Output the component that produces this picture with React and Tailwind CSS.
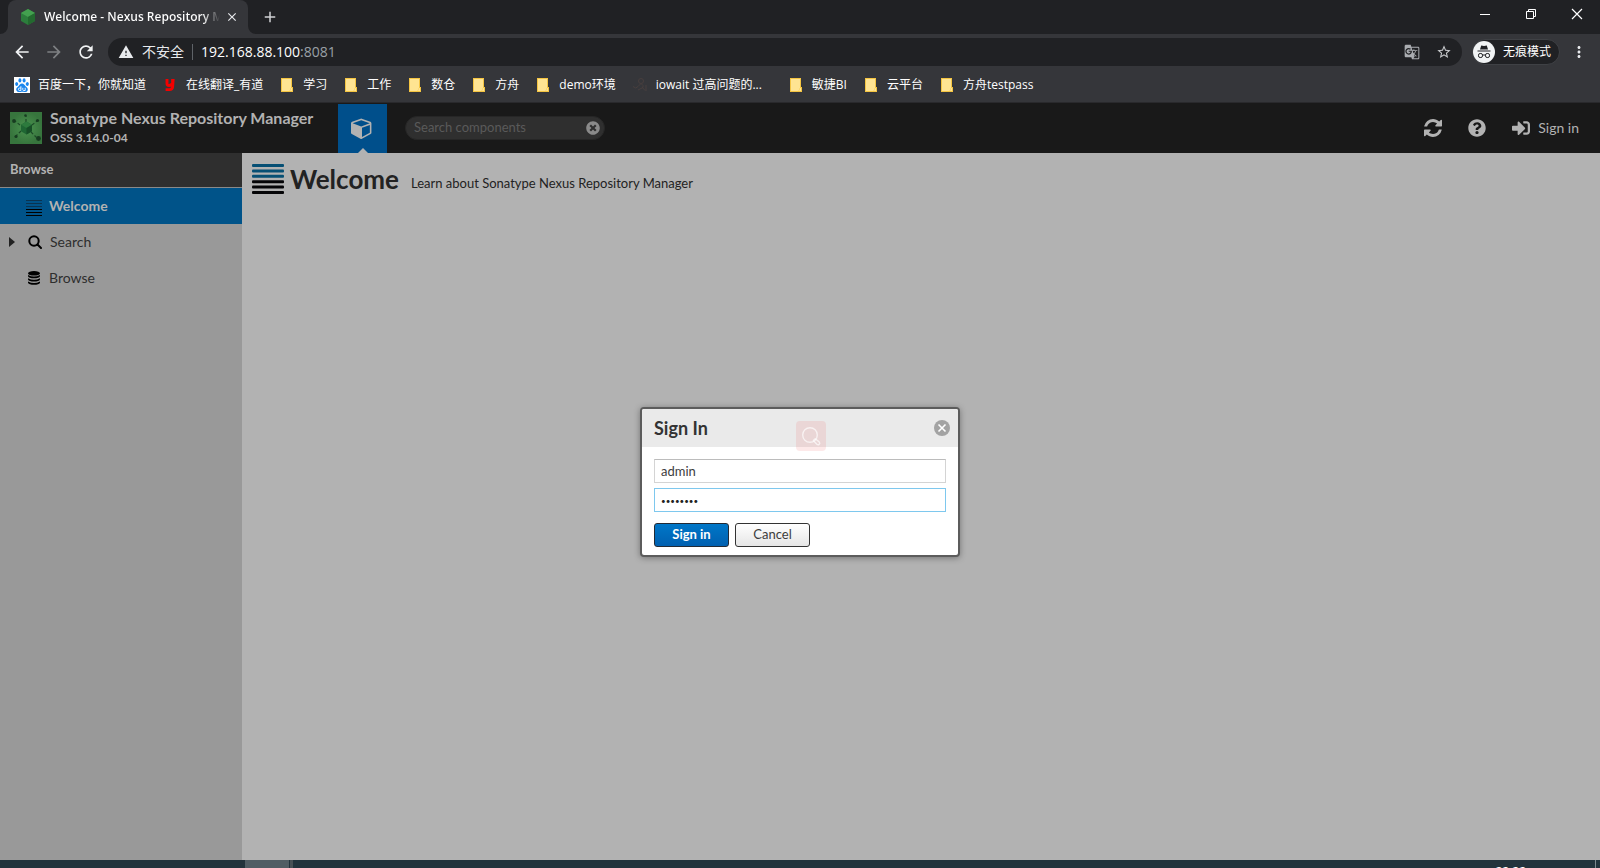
import React from 'react';
import { FaQuestionCircle, FaSignInAlt, FaTimesCircle } from 'react-icons/fa';
import { MdArrowBack, MdArrowForward, MdRefresh, MdWarning, MdStarBorder, MdMoreVert, MdClose, MdAdd, MdGTranslate } from 'react-icons/md';

const BOOKMARKS = [
  { icon: 'baidu', label: '百度一下，你就知道' },
  { icon: 'youdao', label: '在线翻译_有道' },
  { icon: 'folder', label: '学习' },
  { icon: 'folder', label: '工作' },
  { icon: 'folder', label: '数仓' },
  { icon: 'folder', label: '方舟' },
  { icon: 'folder', label: 'demo环境' },
  { icon: 'figure', label: 'iowait 过高问题的...', width: 'w-[140px]' },
  { icon: 'folder', label: '敏捷BI' },
  { icon: 'folder', label: '云平台' },
  { icon: 'folder', label: '方舟testpass' },
];

function BookmarkIcon({ kind }) {
  if (kind === 'baidu') {
    return (
      <svg className="size-4 shrink-0" viewBox="0 0 16 16">
        <rect width="16" height="16" fill="#fff" />
        <g fill="#1a86ee">
          <ellipse cx="2.7" cy="7" rx="1.500" ry="1.900" transform="rotate(-15 2.7 7)" />
          <ellipse cx="5.9" cy="3.400" rx="1.500" ry="2.100" />
          <ellipse cx="10.1" cy="3.400" rx="1.500" ry="2.100" />
          <ellipse cx="13.3" cy="7" rx="1.500" ry="1.900" transform="rotate(15 13.3 7)" />
          <path d="M8 6.600c1.900 0 2.500 1.700 3.600 2.700s2.400 1.900 2.200 3.500-1.500 2.400-2.900 2.300S9 14.800 8 14.800s-1.600.3-2.900.3-2.700-.7-2.900-2.300 1.100-2.500 2.200-3.500S6.100 6.600 8 6.600z" />
        </g>
        <path d="M6.900 9.200v4.300H5.600a1.200 1.200 0 0 1 0-2.500h1.200M8.800 10.800v1.900q0 .8.800.8h1.600v-2.700" fill="none" stroke="#fff" strokeWidth=".9" />
      </svg>
    );
  }
  if (kind === 'youdao') {
    return (
      <svg className="size-4 shrink-0" viewBox="0 0 16 16">
        <path d="M5 2v4.500q0 2 2 2t3.600-2V2M11.200 2 10.600 10q-.4 2.600-3 2.600H3.600" fill="none" stroke="#f40000" strokeWidth="2.900" />
      </svg>
    );
  }
  if (kind === 'figure') {
    return (
      <svg className="size-4 shrink-0" viewBox="0 0 16 16" fill="none" stroke="#483f3e" strokeWidth="1">
        <circle cx="9" cy="4" r="2.500" />
        <path d="M1 9.500q3 3 5 0l3-3q3 2 2 4l-5 2.500M10 10l3 3.500M14 8v6" />
      </svg>
    );
  }
  return (
    <svg className="size-4 shrink-0" viewBox="0 0 16 16">
      <path d="M2 1h11v9h1v5H2z" fill="#f5c542" />
      <path d="M3 2h9v8.500l-1.500 3.500H3z" fill="#ffe492" />
      <path d="M12 11h1v3h-2z" fill="#ffe492" />
    </svg>
  );
}

function NexusCube({ className }) {
  return (
    <svg className={className} viewBox="0 0 16 16">
      <path d="M8 0l7 4v8l-7 4-7-4V4z" fill="#2c7d3c" />
      <path d="M8 0l7 4-7 4-7-4z" fill="#43a04f" />
      <path d="M8 8l7-4v8l-7 4z" fill="#23692f" />
    </svg>
  );
}

function NexusLogo() {
  return (
    <svg className="size-8 shrink-0" viewBox="0 0 32 32">
      <defs>
        <radialGradient id="logo">
          <stop offset="0" stopColor="#4c9550" />
          <stop offset="1" stopColor="#37753d" />
        </radialGradient>
      </defs>
      <rect width="32" height="32" fill="url(#logo)" />
      <path d="M16 10V4M10 13l-5-4M22 13l5-4M11 19l-5 5M21 20l6 6" stroke="#1d4a28" strokeWidth="1.200" strokeDasharray="3 2" />
      <g fill="#173c20">
        <circle cx="15.500" cy="3.500" r="1.300" />
        <circle cx="4" cy="9" r="1.900" />
        <circle cx="27.500" cy="8.500" r="1.600" />
        <circle cx="6" cy="24.500" r="1.600" />
        <circle cx="28.500" cy="26.500" r="2.400" />
      </g>
      <path d="M16.500 9.500l5.500 3.200v6.600l-5.500 3.200-5.500-3.200v-6.600z" fill="#1f6733" />
      <path d="M16.500 9.500l5.500 3.200-5.500 3.200-5.500-3.200z" fill="#2d7a3d" />
      <path d="M16.500 15.900l5.500-3.200v6.600l-5.500 3.200z" fill="#174f27" />
    </svg>
  );
}

function StackedLines({ className, top, bar }) {
  return (
    <svg className={className} viewBox="0 0 32 32" preserveAspectRatio="none">
      {[0, 1, 2, 3, 4, 5].map((i) => (
        <rect key={i} x="0" y={1 + i * 5.4} width="32" height={bar} rx="1" fill={i < 3 ? top : '#050507'} />
      ))}
    </svg>
  );
}

function ThinLines() {
  return (
    <svg className="mt-1 mr-[7px] h-[17px] w-4" viewBox="0 0 16 17">
      {[0, 3, 6, 9, 12, 15].map((y) => (
        <rect key={y} y={y} width="16" height="1" fill={y < 8 ? '#0a3350' : '#000'} />
      ))}
    </svg>
  );
}

function Titlebar() {
  return (
    <div className="flex h-[34px] items-stretch bg-[#202124] pl-2">
      <div className="relative flex w-60 items-center rounded-t-lg bg-[#35363a] pl-3 pr-2">
        <NexusCube className="size-4 shrink-0" />
        <span className="ml-2 flex-1 overflow-hidden whitespace-nowrap bg-linear-to-r from-white from-90% to-transparent bg-clip-text text-xs font-semibold text-transparent">
          Welcome - Nexus Repository Manager
        </span>
        <button aria-label="Close tab" className="ml-1 flex size-4 items-center justify-center text-[#e8eaed]">
          <MdClose className="size-3.5" />
        </button>
        <svg className="absolute -left-2 bottom-0 size-2" viewBox="0 0 8 8"><path d="M8 0v8H0a8 8 0 0 0 8-8z" fill="#35363a" /></svg>
        <svg className="absolute -right-2 bottom-0 size-2" viewBox="0 0 8 8"><path d="M0 0v8h8a8 8 0 0 1-8-8z" fill="#35363a" /></svg>
      </div>
      <button aria-label="New tab" className="ml-3 flex w-5 items-center justify-center text-[#cfd1d4]">
        <MdAdd className="size-[18px]" />
      </button>
      <div className="ml-auto flex h-7 items-center text-white">
        <button aria-label="Minimize" className="flex w-[46px] justify-center">
          <svg className="size-3" viewBox="0 0 12 12"><path d="M1 6.500h10" stroke="currentColor" /></svg>
        </button>
        <button aria-label="Restore" className="flex w-[46px] justify-center">
          <svg className="size-3" viewBox="0 0 12 12" fill="none" stroke="currentColor"><path d="M1.500 3.500h7v7h-7zM3.500 3.500v-2h7v7h-2" /></svg>
        </button>
        <button aria-label="Close" className="flex w-[46px] justify-center">
          <svg className="size-3" viewBox="0 0 12 12"><path d="M1 1l10 10M11 1L1 11" stroke="currentColor" strokeWidth="1.200" /></svg>
        </button>
      </div>
    </div>
  );
}

function AddressBar() {
  return (
    <div className="flex h-9 items-center bg-[#35363a] px-3">
      <button aria-label="Back" className="text-[#f1f3f4]"><MdArrowBack className="size-5" /></button>
      <button aria-label="Forward" className="ml-3 text-[#7e8083]"><MdArrowForward className="size-5" /></button>
      <button aria-label="Reload" className="ml-3 text-[#f1f3f4]"><MdRefresh className="size-5" /></button>
      <div className="ml-3 flex h-7 flex-1 items-center rounded-full bg-[#202124] px-2.5">
        <MdWarning className="size-4 text-[#e8eaed]" />
        <span className="ml-2 text-sm text-[#e8eaed]">不安全</span>
        <span className="mx-2 h-4 w-px bg-[#5f6368]" />
        <span className="text-sm text-white">192.168.88.100<span className="text-[#9aa0a6]">:8081</span></span>
        <button aria-label="Translate" className="ml-auto text-[#a9acb0]"><MdGTranslate className="size-4" /></button>
        <button aria-label="Bookmark" className="ml-4 text-[#c8cacd]"><MdStarBorder className="size-4" /></button>
      </div>
      <button className="ml-2.5 flex h-[26px] items-center rounded-full border border-[#3f4145] bg-[#202124] pr-2 text-xs text-white">
        <svg className="mr-2 size-[22px]" viewBox="0 0 22 22">
          <circle cx="11" cy="11" r="11" fill="#f1f3f4" />
          <path d="M8.200 4.500l2.800.6 2.800-.6 1.200 4H7zM4.500 9.500h13v1h-13z" fill="#202124" />
          <g fill="none" stroke="#202124"><rect x="5.500" y="12.500" width="4" height="4" rx="1.600" /><rect x="12.500" y="12.500" width="4" height="4" rx="1.600" /><path d="M9.500 14h3" /></g>
        </svg>
        无痕模式
      </button>
      <button aria-label="Menu" className="ml-2.5 text-[#e8eaed]"><MdMoreVert className="size-[18px]" /></button>
    </div>
  );
}

function BookmarksBar() {
  return (
    <nav className="flex h-[33px] items-center gap-4 border-b border-[#29292c] bg-[#35363a] pb-0.5 pl-3.5">
      {BOOKMARKS.map((b) => (
        <a key={b.label} href="#" className={`flex shrink-0 items-center gap-2 whitespace-nowrap text-xs text-white ${b.width ?? ''}`}>
          <BookmarkIcon kind={b.icon} />
          {b.label}
        </a>
      ))}
    </nav>
  );
}

function AppHeader() {
  return (
    <header className="flex h-[50px] items-center bg-[#191919] pl-2.5 pr-[21px] text-[#b2b2b2]">
      <NexusLogo />
      <div className="ml-2 w-[280px]">
        <div className="text-base font-bold leading-5">Sonatype Nexus Repository Manager</div>
        <div className="text-xs font-bold leading-5">OSS 3.14.0-04</div>
      </div>
      <button aria-label="Browse components" className="relative ml-2 flex h-[49px] w-[49px] items-center justify-center self-end bg-[#004f8b]">
        <svg className="mr-px mb-0.5 size-[22px]" viewBox="0 0 1792 1792" fill="#b2b2b2">
          <path d="M896 1629l640-349v-636l-640 233v752zm-64-865l698-254-698-254-698 254zm832-252v768q0 35-18 65t-49 47l-704 384q-28 16-61 16t-61-16l-704-384q-31-17-49-47t-18-65v-768q0-40 23-73t61-47l704-256q22-8 44-8t44 8l704 256q38 14 61 47t23 73z" />
        </svg>
        <svg className="absolute bottom-0 h-[5px] w-2.5" viewBox="0 0 10 5"><path d="M0 5l5-5 5 5z" fill="#b2b2b2" /></svg>
      </button>
      <div className="ml-[18px] flex h-6 w-[200px] items-center rounded-full border border-[#262626] bg-[#2f2f2f] pl-2 pr-1">
        <input aria-label="Search components" placeholder="Search components" className="min-w-0 flex-1 bg-transparent text-[13px] outline-none placeholder:text-[#5a5a5a]" />
        <button aria-label="Clear search" className="text-[#8a8a8a]"><FaTimesCircle className="size-3.5" /></button>
      </div>
      <div className="ml-auto flex items-center">
        <button aria-label="Refresh">
          <svg className="size-[18px]" viewBox="0 0 1536 1536" fill="currentColor">
            <path d="M1511 928q0 5-1 7-64 268-268 434.500t-478 166.500q-146 0-282.500-55t-243.500-157l-129 129q-19 19-45 19t-45-19-19-45v-448q0-26 19-45t45-19h448q26 0 45 19t19 45-19 45l-137 137q71 66 161 102t187 36q134 0 250-65t186-179q11-17 53-117 8-23 30-23h192q13 0 22.500 9.500t9.500 22.500zm25-800v448q0 26-19 45t-45 19h-448q-26 0-45-19t-19-45 19-45l138-138q-148-137-349-137-134 0-250 65t-186 179q-11 17-53 117-8 23-30 23h-199q-13 0-22.500-9.500t-9.500-22.500v-7q65-268 270-434.500t480-166.500q146 0 284 55.500t245 156.500l130-129q19-19 45-19t45 19 19 45z" />
          </svg>
        </button>
        <button aria-label="Help" className="ml-[26px]"><FaQuestionCircle className="size-[18px]" /></button>
        <button className="ml-[26px] flex items-center gap-2 text-sm">
          <FaSignInAlt className="size-[18px]" />
          Sign in
        </button>
      </div>
    </header>
  );
}

function Sidebar() {
  return (
    <aside className="w-[242px] shrink-0 bg-[#999999]">
      <h2 className="flex h-[35px] items-center border-b border-[#8a8a8a] bg-[#2f2f2f] pl-2.5 text-[13px] font-bold text-[#b2b2b2]">Browse</h2>
      <a href="#" className="flex h-9 items-center bg-[#005389] pl-[26px] text-sm font-bold text-[#b2b2b2]">
        <ThinLines />
        Welcome
      </a>
      <a href="#" className="flex h-9 items-center pl-2 text-sm text-[#2e2e2e]">
        <svg className="mr-3 h-2.5 w-2" viewBox="0 0 8 10"><path d="M1 0l6 5-6 5z" fill="#222" /></svg>
        <svg className="mr-2 size-3.5" viewBox="0 0 14 14" fill="none" stroke="#000" strokeWidth="2"><circle cx="6" cy="6" r="4.700" /><path d="M9.500 9.500l3.500 3.500" strokeLinecap="round" /></svg>
        Search
      </a>
      <a href="#" className="flex h-9 items-center pl-7 text-sm text-[#2e2e2e]">
        <svg className="mr-[9px] h-3.5 w-3" viewBox="0 0 12 14">
          <ellipse cx="6" cy="2.300" rx="6" ry="2.300" />
          <path d="M0 4q6 3 12 0v1.300q-1 2-6 2t-6-2zM0 7.200q6 3 12 0v1.300q-1 2-6 2t-6-2zM0 10.400q6 3 12 0v1.300q-1 2-6 2t-6-2z" />
        </svg>
        Browse
      </a>
    </aside>
  );
}

function SignInDialog() {
  return (
    <div className="absolute inset-0 flex items-center justify-center">
      <form role="dialog" aria-label="Sign In" className="relative w-80 overflow-hidden rounded-[4px] border-2 border-[#5c5c5c] bg-white shadow-[0_1px_6px_rgba(0,0,0,0.35)]">
        <div className="flex h-[38px] items-center justify-between bg-[#eaeaea] pl-3 pr-2">
          <h2 className="text-lg font-bold text-[#333]">Sign In</h2>
          <button type="button" aria-label="Close dialog">
            <svg className="size-4" viewBox="0 0 16 16"><circle cx="8" cy="8" r="8" fill="#a3a3a3" /><path d="M4.500 4.500l7 7M11.500 4.500l-7 7" stroke="#fff" strokeWidth="1.600" /></svg>
          </button>
        </div>
        <div className="flex flex-col gap-[5px] px-3 pt-3 pb-2 text-[13px] text-[#3c3c3c]">
          <input aria-label="Username" defaultValue="admin" className="h-6 w-full border border-[#d4d4d4] border-t-[#bcbcbc] px-1.5 outline-none" />
          <input aria-label="Password" type="password" defaultValue="admin123" className="h-6 w-full border border-[#7ec8ee] px-1.5 pt-0.5 text-[8px] text-[#222] outline-none" />
          <div className="mt-1.5 flex gap-1.5">
            <button type="button" className="h-6 w-[75px] rounded-[3px] border border-[#222a35] bg-linear-to-b from-[#0077c8] to-[#0060b0] font-bold text-white">Sign in</button>
            <button type="button" className="h-6 w-[75px] rounded-[3px] border border-[#333] bg-linear-to-b from-white to-[#e6e6e6]">Cancel</button>
          </div>
        </div>
        <svg className="absolute left-[154px] top-3 size-[30px]" viewBox="0 0 30 30">
          <rect width="30" height="30" rx="4" fill="#f04848" fillOpacity="0.120" />
          <g fill="none" stroke="#fff" strokeOpacity="0.650" strokeWidth="1.400">
            <circle cx="14" cy="14" r="7.300" />
            <path d="M17.300 19.600l1.900-1.900 4 3.200a1.500 1.500 0 0 1-2.300 2.400z" strokeLinejoin="round" />
          </g>
        </svg>
      </form>
    </div>
  );
}

export default function App() {
  return (
    <div className="flex h-screen flex-col overflow-hidden font-['Lato','Noto_Sans_CJK_SC',sans-serif]">
      <div className="shrink-0 font-['Open_Sans','Noto_Sans_CJK_SC',sans-serif]">
        <Titlebar />
        <AddressBar />
        <BookmarksBar />
      </div>
      <div className="relative flex min-h-0 flex-1 flex-col">
        <AppHeader />
        <div className="flex min-h-0 flex-1">
          <Sidebar />
          <main className="flex flex-1 items-start bg-[#b2b2b2] pl-2.5 pt-2.5 text-[#222]">
            <StackedLines className="h-8 w-8" top="#064f74" bar="3" />
            <h1 className="ml-1.5 text-[26px] font-bold leading-8">Welcome</h1>
            <p className="ml-3 mt-1 text-[13px] leading-8">Learn about Sonatype Nexus Repository Manager</p>
          </main>
        </div>
        <SignInDialog />
      </div>
      <footer className="flex h-2 shrink-0 overflow-hidden bg-[#22333c] font-['Open_Sans',sans-serif]">
        <div className="ml-[245px] w-11 bg-[#505d64]" />
        <div className="ml-px w-[3px] bg-[#475055]" />
        <time className="ml-auto mr-[69px] pt-1 text-xs leading-4 text-white">22:22</time>
        <div className="mr-1 w-px bg-[#7d888e]" />
      </footer>
    </div>
  );
}
